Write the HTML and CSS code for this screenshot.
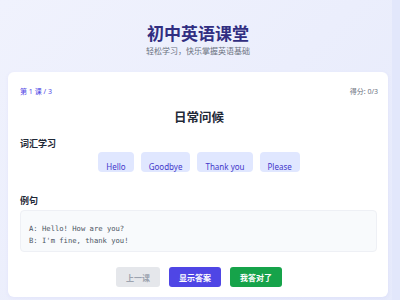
FILE: index.html
```html
<!DOCTYPE html>
<html lang="zh-CN">
<head>
    <meta charset="UTF-8">
    <meta name="viewport" content="width=device-width, initial-scale=1.0">
    <title>初中英语课堂</title>
    <link rel="stylesheet" href="styles.css">
</head>
<body>
    <div class="app">
        <!-- Header -->
        <header class="header">
            <h1>初中英语课堂</h1>
            <p>轻松学习，快乐掌握英语基础</p>
        </header>

        <!-- Lesson Card -->
        <div class="card">
            <div class="meta">
                <span class="lesson-no">第 1 课 / 3</span>
                <span class="score">得分: 0/3</span>
            </div>
            <h2 class="lesson-title">日常问候</h2>

            <h3 class="section-title">词汇学习</h3>
            <div class="words">
                <span class="word">Hello</span>
                <span class="word">Goodbye</span>
                <span class="word">Thank you</span>
                <span class="word">Please</span>
            </div>

            <h3 class="section-title">例句</h3>
            <div class="example">A: Hello! How are you?<br>B: I'm fine, thank you!</div>

            <div class="actions">
                <button class="btn btn-prev" disabled>上一课</button>
                <button class="btn btn-show">显示答案</button>
                <button class="btn btn-right">我答对了</button>
            </div>
        </div>
    </div>
</body>
</html>
```

FILE: styles.css
```css
html {
    background: #e2e7fb;
}
body {
    margin: 0;
    font-family: "Noto Sans", "Noto Sans CJK SC", sans-serif;
    color: #1f2937;
}
.app {
    width: 392px;
    min-height: 320px;
    padding: 0 4px 0 8px;
    box-sizing: border-box;
    background: linear-gradient(135deg, #f0f2fd, #e6eafb);
}
.header {
    text-align: center;
    padding-top: 23px;
    height: 49px;
}
.header h1 {
    margin: 0;
    font-size: 17px;
    line-height: 22px;
    font-weight: 700;
    color: #312e81;
}
.header p {
    margin: 0;
    font-size: 8px;
    line-height: 11px;
    color: #6b7280;
}
.card {
    background: #fff;
    border-radius: 6px;
    padding: 14px 10px 10px 12px;
    box-shadow: 0 1px 4px rgba(79, 70, 229, 0.06);
}
.meta {
    display: flex;
    justify-content: space-between;
    font-size: 7px;
    line-height: 12px;
}
.lesson-no {
    color: #4f46e5;
}
.score {
    color: #6b7280;
}
.lesson-title {
    margin: 12px 0 0;
    text-align: center;
    font-size: 12.5px;
    line-height: 16px;
    font-weight: 700;
    color: #1f2937;
}
.section-title {
    margin: 12px 0 0;
    font-size: 9px;
    line-height: 12px;
    font-weight: 700;
    color: #1f2937;
}
.words {
    display: flex;
    justify-content: center;
    gap: 7px;
    margin-top: 2px;
}
.word {
    background: #e0e7ff;
    color: #4338ca;
    font-size: 8px;
    line-height: 11px;
    padding: 9px 8px 0;
    border-radius: 4px;
}
.words + .section-title {
    margin-top: 23px;
}
.example {
    margin-top: 3px;
    margin-right: 1px;
    padding: 12px 8px 4px;
    background: #f8fafc;
    border: 1px solid #eef0f5;
    border-radius: 4px;
    font-family: "DejaVu Sans Mono", monospace;
    font-size: 7.2px;
    line-height: 12px;
    color: #4b5563;
}
.actions {
    display: flex;
    justify-content: center;
    gap: 9px;
    margin-top: 15px;
}
.btn {
    height: 20px;
    padding: 0 10px;
    border: none;
    border-radius: 3px;
    font-family: "Noto Sans CJK SC", sans-serif;
    font-size: 8px;
    font-weight: 700;
    color: #fff;
    cursor: pointer;
}
.btn-prev {
    background: #e5e7eb;
    color: #9ca3af;
    cursor: default;
}
.btn-show {
    background: #4f46e5;
}
.btn-right {
    background: #16a34a;
}
```
